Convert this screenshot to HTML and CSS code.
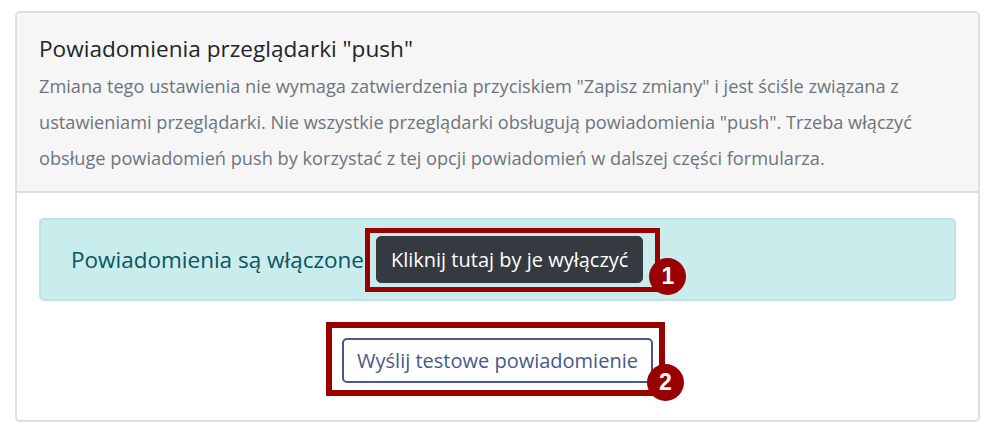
FILE: index.html
```html
<!DOCTYPE html>
<html lang="pl">
<head>
<meta charset="utf-8">
<title>Powiadomienia push</title>
<link rel="stylesheet" href="styles.css">
</head>
<body>
<div class="card">
  <div class="card-header">
    <h5 class="title">Powiadomienia przeglądarki "push"</h5>
    <p class="desc">Zmiana tego ustawienia nie wymaga zatwierdzenia przyciskiem "Zapisz zmiany" i jest ściśle związana z ustawieniami przeglądarki. Nie wszystkie przeglądarki obsługują powiadomienia "push". Trzeba włączyć obsługe powiadomień push by korzystać z tej opcji powiadomień w dalszej części formularza.</p>
  </div>
  <div class="card-body">
    <div class="alert">
      <span class="alert-text">Powiadomienia są włączone</span>
      <span class="mark mark-1">
        <button class="btn btn-dark">Kliknij tutaj by je wyłączyć</button>
        <span class="frame"></span>
        <span class="badge">1</span>
      </span>
    </div>
    <div class="test-row">
      <span class="mark mark-2">
        <button class="btn btn-outline">Wyślij testowe powiadomienie</button>
        <span class="frame"></span>
        <span class="badge">2</span>
      </span>
    </div>
  </div>
</div>
</body>
</html>
```
FILE: styles.css
```css
html, body {
  margin: 0;
  background: #ffffff;
}
body {
  padding: 11px 8px 8px 15px;
  font-family: "Open Sans", "Noto Sans", sans-serif;
}
.card {
  border: 2px solid #dedede;
  border-radius: 5px;
  background: #fff;
  overflow: hidden;
}
.card-header {
  background: #f6f6f6;
  border-bottom: 2px solid #dedede;
  padding: 21px 22px 15px 22px;
}
.title {
  margin: 0 0 4px 0;
  font-size: 22.6px;
  font-weight: 400;
  line-height: 30px;
  color: #212529;
}
.desc {
  margin: 0;
  font-size: 18.2px;
  line-height: 36px;
  color: #6c757d;
}
.card-body {
  padding: 25px 22px 37px 22px;
}
.alert {
  display: flex;
  align-items: center;
  background: #c9ecec;
  border: 2px solid #bde3e6;
  border-radius: 5px;
  padding: 16px 30px;
}
.alert-text {
  font-size: 22.5px;
  color: #0c5460;
  margin-right: 12px;
}
.mark {
  position: relative;
  display: inline-block;
}
.btn {
  font-family: "Open Sans", "Noto Sans", sans-serif;
  display: block;
  border-radius: 5px;
  cursor: pointer;
}
.btn-dark {
  background: #343a40;
  color: #fff;
  border: 1px solid #343a40;
  font-size: 20px;
  height: 47px;
  padding: 0 14px;
}
.btn-outline {
  background: #fff;
  color: #46588c;
  border: 2px solid #46588c;
  font-size: 20px;
  height: 45px;
  padding: 0 13px;
}
.test-row {
  display: flex;
  justify-content: center;
  margin-top: 37px;
}
.frame {
  position: absolute;
  border: 5px solid #990000;
  pointer-events: none;
}
.mark-1 .frame {
  left: -11px;
  right: -17px;
  top: -8px;
  bottom: -9px;
}
.mark-2 .frame {
  border-width: 6px;
  left: -16px;
  right: -12px;
  top: -16px;
  bottom: -13px;
}
.badge {
  position: absolute;
  width: 37px;
  height: 37px;
  border-radius: 50%;
  background: #990000;
  color: #fff;
  font-family: "Liberation Sans", Arial, sans-serif;
  font-weight: 700;
  font-size: 23px;
  line-height: 37px;
  text-align: center;
}
.mark-1 .badge {
  right: -43px;
  bottom: -12px;
}
.mark-2 .badge {
  right: -31px;
  bottom: -18px;
}
```
